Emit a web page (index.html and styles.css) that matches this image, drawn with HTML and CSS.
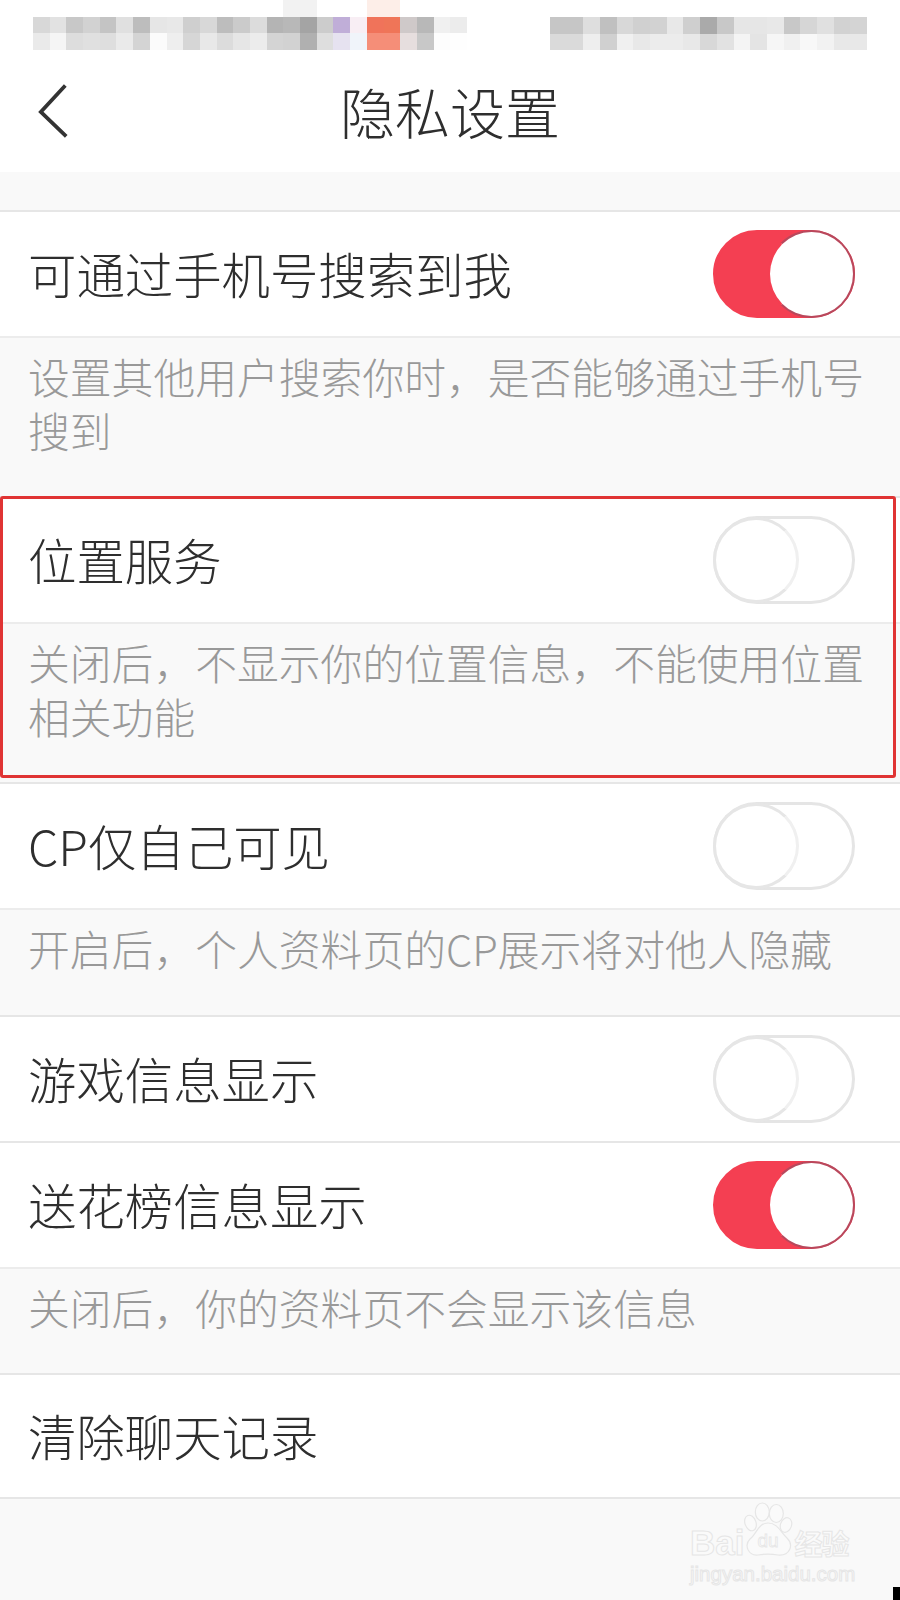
FILE: index.html
```html
<!DOCTYPE html>
<html lang="zh-CN">
<head>
    <meta charset="UTF-8">
    <title>隐私设置</title>
    <link rel="stylesheet" href="styles.css">
</head>
<body>
    <header class="top">
        <!-- Status bar is mosaicked in the source, one rect per block -->
        <div class="status-bar">
            <svg class="mosaic mosaic-left" viewBox="0 0 26 3" preserveAspectRatio="none" shape-rendering="crispEdges">
                <rect x="15" y="0" width="2" height="1" fill="#f2f2f2"/><rect x="20" y="0" width="2" height="1" fill="#fdeee8"/>
                <rect x="0" y="1" width="1" height="1" fill="#d8d8d8"/><rect x="1" y="1" width="1" height="1" fill="#e2e2e2"/><rect x="2" y="1" width="1" height="1" fill="#c8c8c8"/><rect x="3" y="1" width="1" height="1" fill="#d2d2d2"/><rect x="4" y="1" width="1" height="1" fill="#c4c4c4"/><rect x="5" y="1" width="1" height="1" fill="#e0e0e0"/><rect x="6" y="1" width="1" height="1" fill="#bdbdbd"/><rect x="7" y="1" width="1" height="1" fill="#e6e6e6"/><rect x="8" y="1" width="1" height="1" fill="#e8e8e8"/><rect x="9" y="1" width="1" height="1" fill="#cfcfcf"/><rect x="10" y="1" width="1" height="1" fill="#d8d8d8"/><rect x="11" y="1" width="1" height="1" fill="#bdbdbd"/><rect x="12" y="1" width="1" height="1" fill="#cbcbcb"/><rect x="13" y="1" width="1" height="1" fill="#dcdcdc"/><rect x="14" y="1" width="1" height="1" fill="#b4b4b4"/><rect x="15" y="1" width="1" height="1" fill="#b8b8b8"/><rect x="16" y="1" width="1" height="1" fill="#a4a4a4"/><rect x="17" y="1" width="1" height="1" fill="#cccccc"/><rect x="18" y="1" width="1" height="1" fill="#c0aed8"/><rect x="19" y="1" width="1" height="1" fill="#f8eef4"/><rect x="20" y="1" width="1" height="1" fill="#f0735a"/><rect x="21" y="1" width="1" height="1" fill="#ef7558"/><rect x="22" y="1" width="1" height="1" fill="#cfc9c9"/><rect x="23" y="1" width="1" height="1" fill="#b8b8b8"/><rect x="24" y="1" width="1" height="1" fill="#f0f0f0"/><rect x="25" y="1" width="1" height="1" fill="#ececec"/>
                <rect x="0" y="2" width="1" height="1" fill="#eaeaea"/><rect x="1" y="2" width="1" height="1" fill="#f5f5f5"/><rect x="2" y="2" width="1" height="1" fill="#dddddd"/><rect x="3" y="2" width="1" height="1" fill="#e0e0e0"/><rect x="4" y="2" width="1" height="1" fill="#dedede"/><rect x="5" y="2" width="1" height="1" fill="#eaeaea"/><rect x="6" y="2" width="1" height="1" fill="#d4d4d4"/><rect x="7" y="2" width="1" height="1" fill="#fbfbfb"/><rect x="8" y="2" width="1" height="1" fill="#eeeeee"/><rect x="9" y="2" width="1" height="1" fill="#d6d6d6"/><rect x="10" y="2" width="1" height="1" fill="#e8e8e8"/><rect x="11" y="2" width="1" height="1" fill="#dcdcdc"/><rect x="12" y="2" width="1" height="1" fill="#e6e6e6"/><rect x="13" y="2" width="1" height="1" fill="#ececec"/><rect x="14" y="2" width="1" height="1" fill="#d4d4d4"/><rect x="15" y="2" width="1" height="1" fill="#d2d2d2"/><rect x="16" y="2" width="1" height="1" fill="#b0b0b0"/><rect x="17" y="2" width="1" height="1" fill="#dedede"/><rect x="18" y="2" width="1" height="1" fill="#e6e2f0"/><rect x="19" y="2" width="1" height="1" fill="#f0f4fa"/><rect x="20" y="2" width="1" height="1" fill="#f58e78"/><rect x="21" y="2" width="1" height="1" fill="#f58e78"/><rect x="22" y="2" width="1" height="1" fill="#e6dede"/><rect x="23" y="2" width="1" height="1" fill="#c8c8c8"/><rect x="24" y="2" width="1" height="1" fill="#fdfdfd"/><rect x="25" y="2" width="1" height="1" fill="#fefefe"/>
            </svg>
            <svg class="mosaic mosaic-right" viewBox="0 0 19 2" preserveAspectRatio="none" shape-rendering="crispEdges">
                <rect x="0" y="0" width="1" height="1" fill="#c6c6c6"/><rect x="1" y="0" width="1" height="1" fill="#c6c6c6"/><rect x="2" y="0" width="1" height="1" fill="#dedede"/><rect x="3" y="0" width="1" height="1" fill="#c0c0c0"/><rect x="4" y="0" width="1" height="1" fill="#d8d8d8"/><rect x="5" y="0" width="1" height="1" fill="#d0d0d0"/><rect x="6" y="0" width="1" height="1" fill="#d2d2d2"/><rect x="7" y="0" width="1" height="1" fill="#e8e8e8"/><rect x="8" y="0" width="1" height="1" fill="#cfcfcf"/><rect x="9" y="0" width="1" height="1" fill="#aaaaaa"/><rect x="10" y="0" width="1" height="1" fill="#c8c8c8"/><rect x="11" y="0" width="1" height="1" fill="#e6e6e6"/><rect x="12" y="0" width="1" height="1" fill="#e6e6e6"/><rect x="13" y="0" width="1" height="1" fill="#e8e8e8"/><rect x="14" y="0" width="1" height="1" fill="#c8c8c8"/><rect x="15" y="0" width="1" height="1" fill="#d6d6d6"/><rect x="16" y="0" width="1" height="1" fill="#e0e0e0"/><rect x="17" y="0" width="1" height="1" fill="#d2d2d2"/><rect x="18" y="0" width="1" height="1" fill="#d4d4d4"/>
                <rect x="0" y="1" width="1" height="1" fill="#dadada"/><rect x="1" y="1" width="1" height="1" fill="#dadada"/><rect x="2" y="1" width="1" height="1" fill="#eeeeee"/><rect x="3" y="1" width="1" height="1" fill="#d0d0d0"/><rect x="4" y="1" width="1" height="1" fill="#f0f0f0"/><rect x="5" y="1" width="1" height="1" fill="#e8e8e8"/><rect x="6" y="1" width="1" height="1" fill="#ececec"/><rect x="7" y="1" width="1" height="1" fill="#ececec"/><rect x="8" y="1" width="1" height="1" fill="#e8e8e8"/><rect x="9" y="1" width="1" height="1" fill="#d8d8d8"/><rect x="10" y="1" width="1" height="1" fill="#e2e2e2"/><rect x="11" y="1" width="1" height="1" fill="#f4f4f4"/><rect x="12" y="1" width="1" height="1" fill="#e4e4e4"/><rect x="13" y="1" width="1" height="1" fill="#f6f6f6"/><rect x="14" y="1" width="1" height="1" fill="#f0f0f0"/><rect x="15" y="1" width="1" height="1" fill="#f8f8f8"/><rect x="16" y="1" width="1" height="1" fill="#f2f2f2"/><rect x="17" y="1" width="1" height="1" fill="#e8e8e8"/><rect x="18" y="1" width="1" height="1" fill="#e8e8e8"/>
            </svg>
        </div>

        <div class="nav-bar">
            <svg class="back-icon" viewBox="0 0 34 60">
                <path d="M29 3 L3 31 L30 57" fill="none" stroke="#333" stroke-width="4" stroke-linejoin="miter"/>
            </svg>
            <h1 class="nav-title">隐私设置</h1>
        </div>
    </header>

    <main class="settings">
        <div class="row">
            <span class="row-label">可通过手机号搜索到我</span>
            <div class="toggle on"><div class="knob"></div></div>
        </div>
        <p class="note">设置其他用户搜索你时，是否能够通过手机号搜到</p>

        <!-- Red frame marks the section being pointed out -->
        <section class="highlight">
            <div class="row">
                <span class="row-label">位置服务</span>
                <div class="toggle"><div class="knob"></div></div>
            </div>
            <p class="note">关闭后，不显示你的位置信息，不能使用位置相关功能</p>
        </section>

        <div class="row">
            <span class="row-label">CP仅自己可见</span>
            <div class="toggle"><div class="knob"></div></div>
        </div>
        <p class="note note-short">开启后，个人资料页的CP展示将对他人隐藏</p>

        <div class="row">
            <span class="row-label">游戏信息显示</span>
            <div class="toggle"><div class="knob"></div></div>
        </div>
        <div class="row">
            <span class="row-label">送花榜信息显示</span>
            <div class="toggle on"><div class="knob"></div></div>
        </div>
        <p class="note note-short">关闭后，你的资料页不会显示该信息</p>

        <div class="row row-last">
            <span class="row-label">清除聊天记录</span>
        </div>
    </main>

    <!-- Watermark over the bottom of the page -->
    <div class="watermark">
        <div class="wm-logo">
            <span class="wm-text">Bai</span>
            <svg class="wm-paw" viewBox="0 0 50 58">
                <ellipse cx="18.3" cy="11" rx="7" ry="9"/>
                <ellipse cx="32.3" cy="12.5" rx="7" ry="9"/>
                <ellipse cx="6.5" cy="22" rx="5.5" ry="8" transform="rotate(-20 6.5 22)"/>
                <ellipse cx="42" cy="24" rx="5.5" ry="7.5" transform="rotate(20 42 24)"/>
                <path d="M24 22 C14 22 12 34 6 38 C0 44 4 55 14 54 C20 53 28 53 34 54 C46 55 50 44 43 37 C37 32 34 22 24 22 Z"/>
                <text class="wm-du" x="24" y="46">du</text>
            </svg>
            <span class="wm-text wm-cn">经验</span>
        </div>
        <div class="wm-url">jingyan.baidu.com</div>
    </div>
    <div class="corner-mark"></div>
</body>
</html>
```

FILE: styles.css
```css
/* Basic reset */
* {
    box-sizing: border-box;
    margin: 0;
    padding: 0;
}
body {
    position: relative;
    width: 900px;
    height: 1600px;
    overflow: hidden;
    font-family: "Noto Sans CJK SC", "Noto Sans", sans-serif;
    font-weight: 300;
    background-color: #f9f9f9;
    color: #2e2e2e;
}
/* Header */
.top {
    height: 172px;
    background: #fff;
}
.status-bar {
    display: flex;
    height: 72px;
    padding-left: 33px;
}
.mosaic {
    display: block;
    filter: blur(0.6px);
}
.mosaic-left {
    width: 434px;
    height: 50px;
}
.mosaic-right {
    width: 317px;
    height: 33px;
    margin-top: 17px;
    margin-left: 83px;
}
.nav-bar {
    display: flex;
    align-items: center;
    justify-content: center;
    position: relative;
    height: 84px;
}
.back-icon {
    position: absolute;
    left: 38px;
    top: 10px;
    width: 32px;
    height: 58px;
}
.nav-title {
    font-size: 55px;
    font-weight: 300;
    line-height: 84px;
    margin-top: -8px;
    color: #2e2e2e;
}
/* Settings list */
.settings {
    padding-top: 38px;
}
.row {
    display: flex;
    align-items: center;
    justify-content: space-between;
    height: 126px;
    padding: 0 45px 0 28px;
    background: #fff;
    border-top: 2px solid #e6e6e6;
}
.row-label {
    font-size: 48.4px;
    line-height: 60px;
    margin-top: -2px;
}
.row-last {
    border-bottom: 2px solid #e6e6e6;
}
.note {
    height: 160px;
    padding: 11px 26px 0 28px;
    font-size: 41.8px;
    line-height: 54px;
    color: #999;
    border-top: 2px solid #ececec;
}
.note-short {
    height: 106.5px;
}
/* Toggle switch */
.toggle {
    display: flex;
    align-items: center;
    justify-content: flex-start;
    width: 142px;
    height: 88px;
    border: 3px solid #e5e5e5;
    border-radius: 44px;
    background: #fff;
}
.knob {
    width: 86px;
    height: 86px;
    margin: -2px 0 -2px -3px;
    border-radius: 50%;
    background: #fff;
    border: 3px solid #e6e6e6;
    border-right-color: #f0f0f0;
}
.toggle.on {
    justify-content: flex-end;
    background: #f43f52;
    border-color: #f43f52;
}
.toggle.on .knob {
    width: 87px;
    height: 88px;
    margin: -3px -3px -3px 0;
    border: 2px solid #b9485c;
    border-left-color: #f43f52;
}
/* Highlight frame */
.highlight {
    position: relative;
}
.highlight::after {
    content: "";
    position: absolute;
    top: 0;
    left: 0;
    right: 4px;
    bottom: 4px;
    border: 3px solid #e03434;
    border-radius: 3px;
}
/* Watermark */
.watermark {
    position: absolute;
    left: 690px;
    top: 1503px;
    width: 170px;
}
.wm-logo {
    display: flex;
    align-items: flex-end;
    height: 56px;
}
.wm-text,
.wm-url {
    color: #fafafa;
    -webkit-text-stroke: 1px #e6e6e6;
    font-family: "Liberation Sans", sans-serif;
}
.wm-text {
    font-size: 35px;
    font-weight: 700;
    line-height: 32px;
}
.wm-cn {
    font-family: "Noto Sans CJK SC", sans-serif;
    font-size: 28px;
    letter-spacing: -1px;
}
.wm-paw {
    width: 50px;
    height: 58px;
    flex-shrink: 0;
    fill: #fafafa;
    stroke: #e6e6e6;
    stroke-width: 1.2;
}
.wm-du {
    font-family: "Liberation Sans", sans-serif;
    font-size: 19px;
    text-anchor: middle;
    stroke-width: 0.8;
}
.wm-url {
    font-size: 20.5px;
    line-height: 26px;
    margin-top: 2px;
}
.corner-mark {
    position: absolute;
    right: 0;
    bottom: 0;
    width: 7px;
    height: 13px;
    background: #000;
}
```
